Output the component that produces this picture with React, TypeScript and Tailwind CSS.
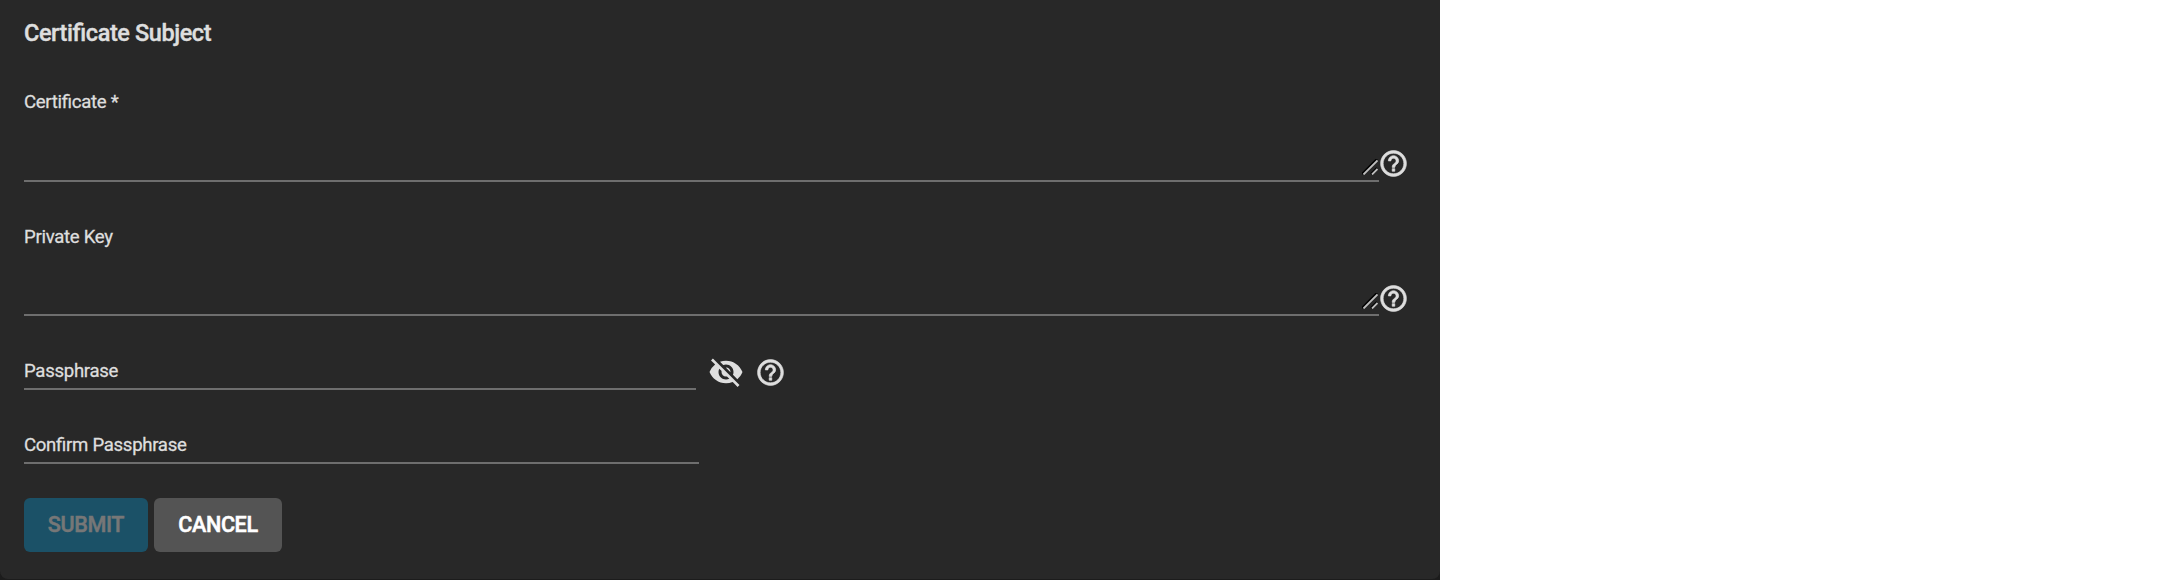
import { MdHelpOutline, MdVisibilityOff } from "react-icons/md";

function Grip() {
  return (
    <svg className="absolute right-px bottom-[5px] h-4 w-4" viewBox="0 0 16 16" fill="none">
      <path d="M0 15 15 0M9 15l6-6" stroke="#000" strokeWidth="2.2" />
      <path d="M1.5 15.5 15.5 1.5M10 15.5l5.5-5.5" stroke="#bdbdbd" strokeWidth="1.8" />
    </svg>
  );
}

function HelpIcon({ className }: { className: string }) {
  return (
    <MdHelpOutline
      className={`h-[31px] w-[31px] shrink-0 [&_path:last-child]:stroke-current [&_path:last-child]:[stroke-width:0.5px] [&_path:first-child]:stroke-none ${className}`}
    />
  );
}

function TextAreaField({ label, className }: { label: string; className: string }) {
  return (
    <div className="flex">
      <div className={`relative w-[1355px] border-b-2 border-[#6e6e6e] ${className}`}>
        {label}
        <Grip />
      </div>
      <HelpIcon className="mt-[58px] -ml-px" />
    </div>
  );
}

export default function App() {
  return (
    <div className="h-[580px] bg-white">
      <div className="h-full w-[1440px] bg-[#1c1c1c]">
        <div
          className="flex h-[579px] w-[1440px] flex-col rounded-b-lg bg-[#282828] pl-6 text-[18.6px] leading-6 font-normal tracking-[-0.3px] text-[#dedede] [-webkit-text-stroke:0.3px] [font-feature-settings:'liga']"
          style={{ fontFamily: "Roboto, sans-serif" }}
        >
          <h2 className="mt-[19px] h-[71px] text-[23.5px] leading-7 font-medium tracking-[-0.42px] [-webkit-text-stroke:0.4px]">
            Certificate Subject
          </h2>
          <div className="h-[135px]">
            <TextAreaField label="Certificate *" className="h-[92px]" />
          </div>
          <div className="h-[134px]">
            <TextAreaField label="Private Key" className="h-[91px]" />
          </div>
          <div className="flex h-[74px]">
            <div className="h-[31px] w-[672px] border-b-2 border-[#6e6e6e]">Passphrase</div>
            <MdVisibilityOff className="-mt-[5px] ml-3 h-9 w-9" />
            <HelpIcon className="-mt-[2px] ml-[11px]" />
          </div>
          <div className="h-[31px] w-[675px] border-b-2 border-[#6e6e6e]">Confirm Passphrase</div>
          <div className="mt-[34px] flex gap-1.5 text-[21.6px] leading-[54px] font-medium [-webkit-text-stroke:0.5px]">
            <button disabled className="h-[54px] w-[124px] rounded-md bg-[#1b5167] tracking-[-0.4px] text-[#777]">
              SUBMIT
            </button>
            <button className="h-[54px] w-32 rounded-md bg-[#545454] tracking-[-0.4px] text-white">CANCEL</button>
          </div>
        </div>
      </div>
    </div>
  );
}
